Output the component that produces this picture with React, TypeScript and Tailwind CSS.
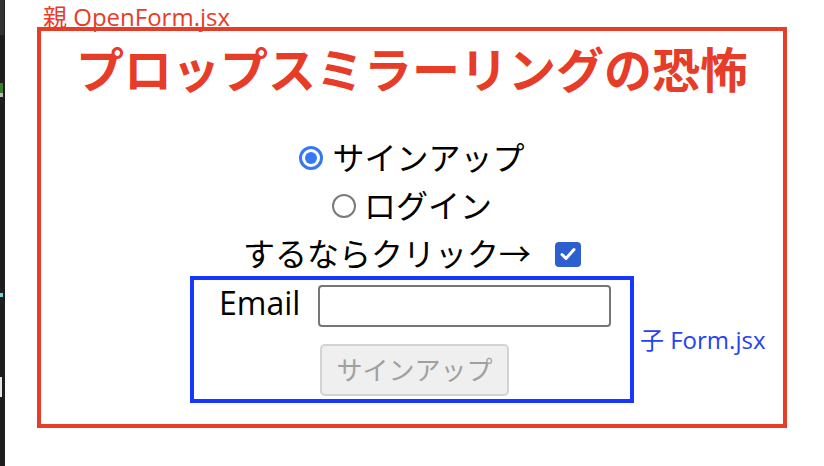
import React from 'react';

const jp = { fontFamily: '"Open Sans", "Noto Sans CJK JP", sans-serif' };

function Radio({ checked }: { checked: boolean }) {
  if (checked) {
    return (
      <span className="flex h-[24px] w-[24px] shrink-0 items-center justify-center rounded-full border-[3px] border-[#3478f6] bg-white">
        <span className="h-[12px] w-[12px] rounded-full bg-[#3478f6]" />
      </span>
    );
  }
  return <span className="h-[24px] w-[24px] shrink-0 rounded-full border-2 border-[#7a7a7a] bg-white" />;
}

function Form() {
  return (
    <div className="relative mt-[-2px] h-[127px] w-[444px] border-4 border-[#1637ff] bg-white">
      <div className="flex items-start pl-[25px] pt-[5px]">
        <span className="mt-[-4px] text-[32px] leading-[44px] text-black">Email</span>
        <input
          type="text"
          className="ml-[18px] h-[42px] w-[293px] rounded-[4px] border-2 border-[#767676] bg-white outline-none"
        />
      </div>
      <button
        type="button"
        disabled
        className="ml-[126px] mt-[17px] flex h-[52px] w-[189px] items-center justify-center rounded-[5px] border-2 border-[#d3d3d3] bg-[#efefef] text-[26px] text-[#a0a0a0]"
      >
        サインアップ
      </button>
      <span className="absolute left-full top-1/2 ml-[10px] -translate-y-1/2 whitespace-nowrap text-[24px] leading-[28px] text-[#2443f2]">
        子 Form.jsx
      </span>
    </div>
  );
}

export default function App() {
  return (
    <div className="flex h-[466px] w-[824px] overflow-hidden bg-white" style={jp}>
      {/* editor edge on the left */}
      <div className="flex w-[5px] flex-col bg-[#1e1e1e]">
        <div className="h-[35px] w-[4px] bg-[#333]" />
        <div className="mt-[48px] h-[10px] w-[3px] bg-[#3d7a2c]" />
        <div className="h-[4px] w-[3px] bg-[#bcbcbc]" />
        <div className="mt-[196px] h-[4px] w-[3px] bg-[#7fd3cf]" />
        <div className="mt-[80px] h-[20px] w-[2px] bg-[#e6e6e6]" />
      </div>

      <div className="pl-[32px]">
        <div className="h-[27px] pl-[6px]">
          <div className="text-[24px] leading-[33px] text-[#e63c28]">親 OpenForm.jsx</div>
        </div>
        <div className="flex h-[401px] w-[750px] flex-col items-center border-4 border-[#e63c28]">
          <h1
            className="mt-[7px] text-[48px] font-bold leading-[58px] text-[#e63c28]"
            style={{ fontFamily: '"Noto Sans CJK JP", sans-serif' }}
          >
            プロップスミラーリングの恐怖
          </h1>

          <div className="mt-[38px] flex flex-col items-center text-[32px] leading-[48px] text-black">
            <label className="flex items-center gap-[9px]">
              <Radio checked />
              <span>サインアップ</span>
            </label>
            <label className="flex items-center gap-[8px]">
              <Radio checked={false} />
              <span>ログイン</span>
            </label>
            <label className="flex items-center">
              <span>するならクリック→</span>
              <span className="ml-[24px] flex h-[25px] w-[26px] items-center justify-center rounded-[4px] bg-[#2d5fd0]">
                <svg width="16" height="14" viewBox="0 0 16 14" fill="none">
                  <path d="M2 7.5 L6 11.5 L14 2.5" stroke="white" strokeWidth="3" strokeLinecap="round" strokeLinejoin="round" />
                </svg>
              </span>
            </label>
          </div>

          <Form />
        </div>
      </div>
    </div>
  );
}
